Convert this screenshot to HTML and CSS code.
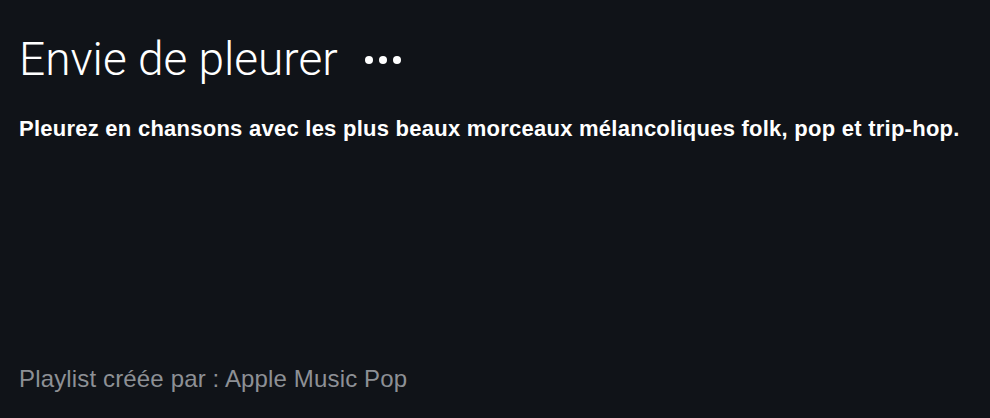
FILE: index.html
```html
<!DOCTYPE html>
<html lang="fr">
<head>
<meta charset="utf-8">
<link rel="stylesheet" href="styles.css">
</head>
<body>
<main class="page">
  <header class="title-row">
    <h1 class="title">Envie de pleurer</h1>
    <button class="more" aria-label="Plus"><span></span><span></span><span></span></button>
  </header>
  <p class="desc">Pleurez en chansons avec les plus beaux morceaux mélancoliques folk, pop et trip-hop.</p>
  <p class="credit">Playlist créée par : Apple Music Pop</p>
</main>
</body>
</html>
```
FILE: styles.css
```css
html, body {
  margin: 0;
  padding: 0;
  background: #101318;
  height: 100%;
}
.page {
  box-sizing: border-box;
  height: 418px;
  padding: 31px 19px 0 19px;
  display: flex;
  flex-direction: column;
  font-family: "Liberation Sans", Arial, sans-serif;
}
.title-row {
  display: flex;
  align-items: center;
  gap: 27px;
}
.title {
  margin: 0;
  font-family: Roboto, "Liberation Sans", sans-serif;
  font-weight: 300;
  font-size: 46px;
  line-height: 56px;
  color: #ffffff;
  letter-spacing: 0;
}
.more {
  display: flex;
  gap: 6px;
  padding: 0;
  border: 0;
  background: none;
  margin-top: 1px;
}
.more span {
  width: 8px;
  height: 8px;
  border-radius: 50%;
  background: #ffffff;
}
.desc {
  margin: 29px 0 0 0;
  font-size: 22px;
  line-height: 26px;
  font-weight: 700;
  color: #ffffff;
  white-space: nowrap;
  letter-spacing: 0.25px;
}
.credit {
  margin: auto 0 25px 0;
  font-size: 24px;
  line-height: 28px;
  color: #8d9095;
  letter-spacing: 0.15px;
}
```
